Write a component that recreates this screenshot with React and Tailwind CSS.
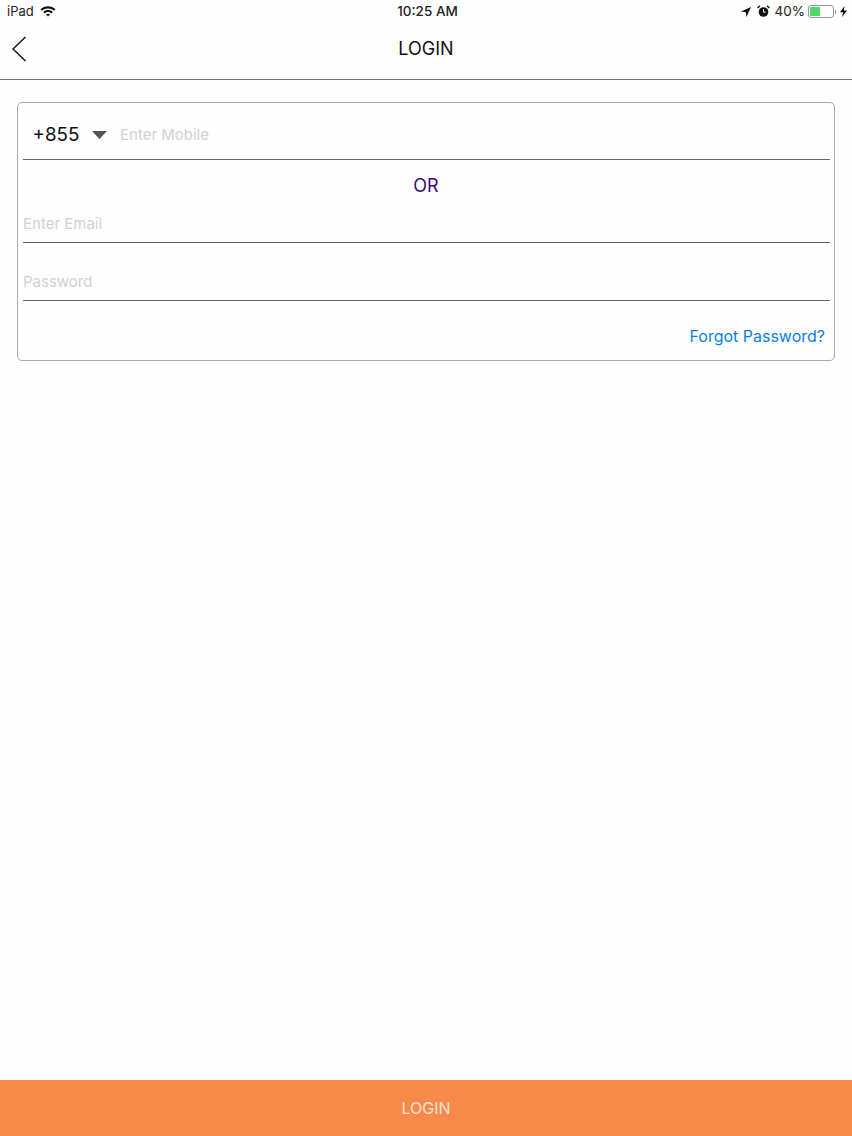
import React from "react";

function Wifi() {
  return (
    <svg width="16" height="12" viewBox="0 0 16 12" className="ml-[6px] mb-[2px]">
      <path d="M0.5 4.2C4.6 0.2 11.4 0.2 15.5 4.2L14 5.8C10.7 2.6 5.3 2.6 2 5.8Z" fill="#111" />
      <path d="M3.2 6.9C5.9 4.3 10.1 4.3 12.8 6.9L11.3 8.4C9.4 6.6 6.6 6.6 4.7 8.4Z" fill="#111" />
      <path d="M5.9 9.5C7.1 8.4 8.9 8.4 10.1 9.5L8 11.6Z" fill="#111" />
    </svg>
  );
}

function StatusBar() {
  return (
    <div className="h-[23px] flex items-center justify-between relative font-['Inter',sans-serif] text-[13px] text-[#222]">
      <div className="flex items-center pl-[7px]">
        <span>iPad</span>
        <Wifi />
      </div>
      <span className="absolute left-0 right-0 text-center text-[13.5px] font-medium pl-[3px]">10:25 AM</span>
      <div className="flex items-center pr-[5px]">
        <svg width="10" height="10" viewBox="0 0 10 10">
          <path d="M10 0L0 4.6L4.8 5.2L5.4 10Z" fill="#111" />
        </svg>
        <svg width="13" height="13" viewBox="0 0 13 13" className="ml-[6px]">
          <circle cx="6.5" cy="7" r="4.8" fill="#111" />
          <path d="M6.5 4.2V7.2H8.6" stroke="#fff" strokeWidth="1" fill="none" />
          <path d="M0.6 3L3 0.8M12.4 3L10 0.8" stroke="#111" strokeWidth="1.4" />
        </svg>
        <span className="ml-[5px] text-[13.5px]">40%</span>
        <div className="ml-[3px] w-[26px] h-[13px] border border-[#999] rounded-[3px] p-[1px] bg-white">
          <div className="w-[10px] h-full bg-[#4cd964] rounded-[1px]" />
        </div>
        <div className="w-[1px] h-[4px] bg-[#999] ml-[1px]" />
        <svg width="7" height="11" viewBox="0 0 7 11" className="ml-[4px]">
          <path d="M4.5 0L0 6.2H3L2.2 11L7 4.6H3.8Z" fill="#111" />
        </svg>
      </div>
    </div>
  );
}

function NavBar() {
  return (
    <div className="h-[57px] border-b border-[#777] flex items-center relative">
      <svg width="16" height="26" viewBox="0 0 16 26" className="ml-[11px] mb-[5px]">
        <path d="M14.5 1L2 13L14.5 25" stroke="#111" strokeWidth="1.4" fill="none" />
      </svg>
      <span className="absolute left-0 right-0 text-center text-[18px] text-[#111] pb-[5px]">LOGIN</span>
    </div>
  );
}

export default function App() {
  return (
    <div className="w-[852px] h-[1136px] flex flex-col bg-[#fefefe] font-['Inter',sans-serif]">
      <StatusBar />
      <NavBar />
      <div className="flex-1 px-[17px] pt-[22px]">
        <div className="h-[259px] border border-[#aaa] rounded-[5px] pl-[5px] pr-[4px] flex flex-col">
          <div className="h-[57px] border-b border-[#666] flex items-center pl-[9.5px] pt-[8px]">
            <span className="text-[18.8px] text-[#111] w-[59.5px]">+855</span>
            <svg width="15" height="8" viewBox="0 0 15 8">
              <path d="M0 0H15L7.5 8Z" fill="#555" />
            </svg>
            <span className="ml-[13px] text-[15px] text-[#d2d0d6]">Enter Mobile</span>
          </div>
          <div className="text-center text-[18px] text-[#3a0a78] mt-[15px] h-[22px] leading-[22px] pr-[1px]">OR</div>
          <div className="mt-[9px] h-[37px] border-b border-[#666] text-[15px] text-[#d2d0d6] leading-[36px]">Enter Email</div>
          <div className="mt-[21px] h-[37px] border-b border-[#666] text-[15px] text-[#d2d0d6] leading-[36px]">Password</div>
          <div className="mt-[24px] text-right text-[16px] text-[#0a7ee0] pr-[5px] leading-[22px]">Forgot Password?</div>
        </div>
      </div>
      <div className="h-[56px] bg-[#f78a4a] flex items-center justify-center text-[16px] text-[#fde3d2]">LOGIN</div>
    </div>
  );
}
